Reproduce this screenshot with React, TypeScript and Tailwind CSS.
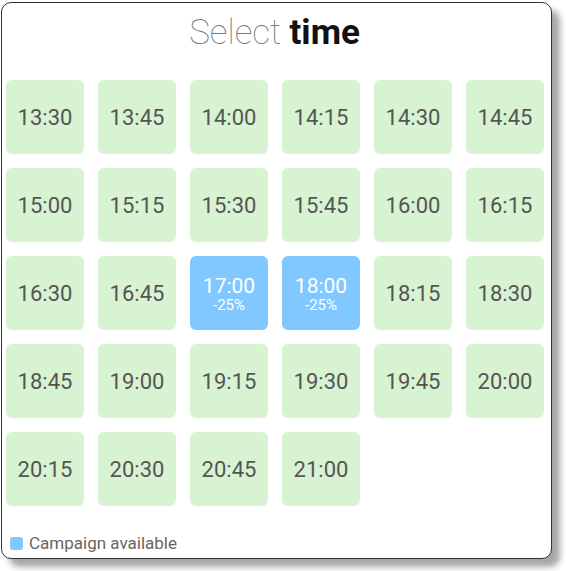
const times = [
  '13:30', '13:45', '14:00', '14:15', '14:30', '14:45',
  '15:00', '15:15', '15:30', '15:45', '16:00', '16:15',
  '16:30', '16:45', '17:00', '18:00', '18:15', '18:30',
  '18:45', '19:00', '19:15', '19:30', '19:45', '20:00',
  '20:15', '20:30', '20:45', '21:00',
];

const campaign: Record<string, string> = { '17:00': '-25%', '18:00': '-25%' };

export default function App() {
  return (
    <div className="min-h-screen bg-white pl-[1px] pt-[2px] font-['Roboto',sans-serif]">
      <div className="flex h-[557px] w-[551px] flex-col rounded-[10px] border border-[#333] bg-white pl-[4px] shadow-[8px_8px_6px_rgba(0,0,0,0.35)]">
        <h1 className="mt-[10px] pr-[8px] text-center text-[35px] leading-[40px]">
          <span className="font-thin text-[#777]">Select </span>
          <span className="font-bold text-[#111]">time</span>
        </h1>

        <div className="mt-[27px] grid grid-cols-[repeat(6,78px)] gap-[14px]">
          {times.map((t) => {
            const off = campaign[t];
            if (off) {
              return (
                <button
                  key={t}
                  className="flex h-[74px] flex-col items-center justify-center rounded-[6px] bg-[#80c8ff] pt-[2px] text-white"
                >
                  <span className="text-[21px] leading-[22px]">{t}</span>
                  <span className="text-[15px] leading-[16px]">{off}</span>
                </button>
              );
            }
            return (
              <button
                key={t}
                className="flex h-[74px] items-center justify-center rounded-[6px] bg-[#d7f3d2] text-[22px] text-[#555]"
              >
                {t}
              </button>
            );
          })}
        </div>

        <div className="mt-auto mb-[5px] flex items-center gap-[6px] pl-[4px]">
          <span className="h-[13px] w-[13px] rounded-[3px] bg-[#80c8ff]" />
          <span className="text-[17px] leading-[20px] text-[#666]">Campaign available</span>
        </div>
      </div>
    </div>
  );
}
